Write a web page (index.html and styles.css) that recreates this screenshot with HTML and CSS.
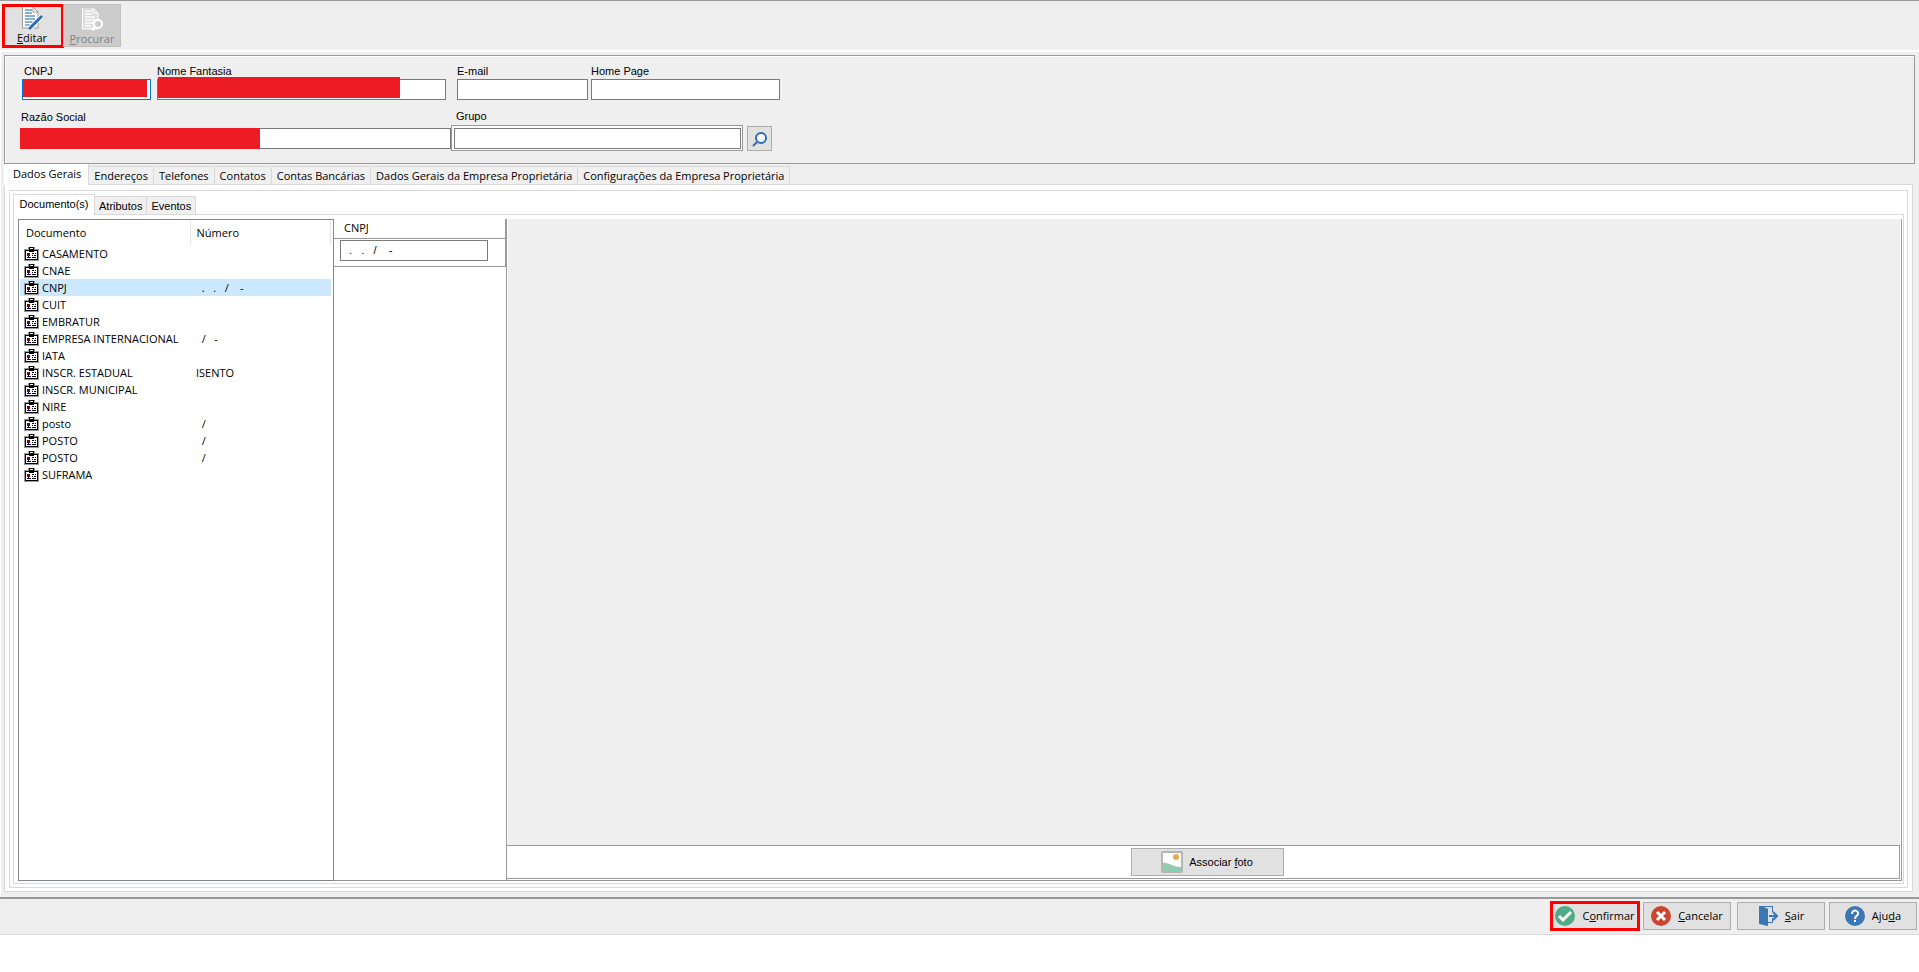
FILE: index.html
```html
<!DOCTYPE html>
<html lang="pt-BR">
<head>
<meta charset="utf-8">
<title>Cadastro de Empresa</title>
<link rel="stylesheet" href="styles.css">
</head>
<body>
<svg class="defs" aria-hidden="true">
  <symbol id="badge" viewBox="0 0 15 14">
    <path d="M0 2h4V0h7v2h4v12H0z" fill="#999"/>
    <path d="M5 0h5v4H5zM1 3h13v10H1z" fill="#000"/>
    <path d="M6 1h3v1H6zM2 4h11v8H2z" fill="#fff"/>
    <path d="M3 6h3v3H3z" fill="#800000"/><path d="M3 10h4v1H3zM4 9h1v1H4z" fill="#000080"/>
    <path d="M5 4h5v1H5zM8 6h2v1H8zM11 6h1v1h-1zM8 8h1v1H8zM10 8h2v1h-2zM8 10h4v1H8z" fill="#000"/>
  </symbol>
  <symbol id="page" viewBox="0 0 22 24">
    <path class="paper" d="M1 1h11l5 5v16H1z"/>
    <path class="lines" d="M4 4h7M4 7h7M4 10h10M4 13h10M4 16h10M4 19h6"/>
    <path class="edge" d="M1.500 1v21H17V6l-5-5v5h5"/>
  </symbol>
</svg>
<div class="app">
  <header class="toolbar">
    <button class="tool marked" type="button">
      <svg class="tool-icon" viewBox="0 0 22 24"><use href="#page"/><path d="M8 23l13-13" stroke="#fff" stroke-width="5"/><path d="M8 23l13-13" stroke="#2d6cb5" stroke-width="3"/></svg>
      <span><u>E</u>ditar</span>
    </button>
    <button class="tool off" type="button" disabled>
      <svg class="tool-icon" viewBox="0 0 22 24"><use href="#page"/><path d="M15 19l-4 4" stroke="#fff" stroke-width="3"/><circle cx="17" cy="17" r="4" fill="#ccc" stroke="#fff" stroke-width="2"/></svg>
      <span><u>P</u>rocurar</span>
    </button>
  </header>
  <main class="frame">
    <form class="company">
      <div class="fields first">
        <div class="field cnpj"><label for="cnpj">CNPJ</label><input id="cnpj" type="text"><i class="mask"></i></div>
        <div class="field fantasia"><label for="fantasia">Nome Fantasia</label><input id="fantasia" type="text"><i class="mask"></i></div>
        <div class="field email"><label for="email">E-mail</label><input id="email" type="text"></div>
        <div class="field home"><label for="home">Home Page</label><input id="home" type="text"></div>
      </div>
      <div class="fields second">
        <div class="field razao"><label for="razao">Razão Social</label><input id="razao" type="text"><i class="mask"></i></div>
        <div class="field grupo"><label for="grupo">Grupo</label><span class="sunken"><input id="grupo" type="text"></span></div>
        <button class="search" type="button" aria-label="Procurar grupo"><svg viewBox="0 0 16 16" width="16" height="16"><circle cx="9" cy="7" r="5" fill="#fff" stroke="#2d6cb5" stroke-width="2"/><path d="M5 11l-4 4" stroke="#2d6cb5" stroke-width="2"/></svg></button>
      </div>
    </form>
    <nav class="tabs outer">
      <button type="button" class="tab active">Dados Gerais</button><button type="button" class="tab">Endereços</button><button type="button" class="tab">Telefones</button><button type="button" class="tab">Contatos</button><button type="button" class="tab">Contas Bancárias</button><button type="button" class="tab">Dados Gerais da Empresa Proprietária</button><button type="button" class="tab">Configurações da Empresa Proprietária</button>
    </nav>
    <section class="page-outer">
      <div class="page-mid">
        <nav class="tabs inner">
          <button type="button" class="tab active">Documento(s)</button><button type="button" class="tab">Atributos</button><button type="button" class="tab">Eventos</button>
        </nav>
        <div class="page-inner">
          <div class="list">
            <table>
              <colgroup><col class="c1"><col></colgroup>
              <thead><tr><th>Documento</th><th>Número</th></tr></thead>
              <tbody>
                <tr><td><svg><use href="#badge"/></svg>CASAMENTO</td><td></td></tr>
                <tr><td><svg><use href="#badge"/></svg>CNAE</td><td></td></tr>
                <tr class="selected"><td><svg><use href="#badge"/></svg>CNPJ</td><td>  .   .   /    -</td></tr>
                <tr><td><svg><use href="#badge"/></svg>CUIT</td><td></td></tr>
                <tr><td><svg><use href="#badge"/></svg>EMBRATUR</td><td></td></tr>
                <tr><td><svg><use href="#badge"/></svg>EMPRESA INTERNACIONAL</td><td>  /   -</td></tr>
                <tr><td><svg><use href="#badge"/></svg>IATA</td><td></td></tr>
                <tr><td><svg><use href="#badge"/></svg>INSCR. ESTADUAL</td><td>ISENTO</td></tr>
                <tr><td><svg><use href="#badge"/></svg>INSCR. MUNICIPAL</td><td></td></tr>
                <tr><td><svg><use href="#badge"/></svg>NIRE</td><td></td></tr>
                <tr><td><svg><use href="#badge"/></svg>posto</td><td>  /</td></tr>
                <tr><td><svg><use href="#badge"/></svg>POSTO</td><td>  /</td></tr>
                <tr><td><svg><use href="#badge"/></svg>POSTO</td><td>  /</td></tr>
                <tr><td><svg><use href="#badge"/></svg>SUFRAMA</td><td></td></tr>
              </tbody>
            </table>
          </div>
          <div class="detail">
            <label for="doc">CNPJ</label>
            <div class="detail-field"><input id="doc" type="text" value="  .   .   /    -"></div>
          </div>
          <div class="photo">
            <div class="canvas"></div>
            <div class="photo-bar">
              <button type="button" class="btn attach"><svg viewBox="0 0 22 22" width="22" height="22"><rect x="1" y="1" width="20" height="20" rx="1" fill="#fff" stroke="#b5b5b5" stroke-width="2"/><path d="M2 12c6-1 8 4 18 4v4H2z" fill="#8fcdb0"/><circle cx="15" cy="6" r="3" fill="#e9a94f"/></svg><span>Associar <u>f</u>oto</span></button>
            </div>
          </div>
        </div>
      </div>
    </section>
  </main>
  <footer class="actions">
    <button type="button" class="btn marked"><svg viewBox="0 0 20 20"><circle cx="10" cy="10" r="10" fill="#4faa85"/><path d="M4 10l4 4 8-8" fill="none" stroke="#fff" stroke-width="3"/></svg><span>C<u>o</u>nfirmar</span></button>
    <button type="button" class="btn"><svg viewBox="0 0 20 20"><circle cx="10" cy="10" r="10" fill="#cb4630"/><path d="M6 6l8 8M14 6l-8 8" stroke="#fff" stroke-width="3"/></svg><span><u>C</u>ancelar</span></button>
    <button type="button" class="btn exit"><svg viewBox="0 0 20 20"><path d="M1 0h14v6h-1V1H6l4 2v13h4v-4h1v5h-5v3L1 18z" fill="#3b76b5"/><path d="M11 10h8M15 6l4 4-4 4" fill="none" stroke="#3b76b5" stroke-width="2"/></svg><span><u>S</u>air</span></button>
    <button type="button" class="btn"><svg viewBox="0 0 20 20"><circle cx="10" cy="10" r="10" fill="#3b76b5"/><path d="M7 8c0-5 7-4 6 0-.5 2-3 2-3 5" fill="none" stroke="#fff" stroke-width="2"/><path d="M9 14h2v2H9z" fill="#fff"/></svg><span>Aju<u>d</u>a</span></button>
  </footer>
</div>
</body>
</html>
```
FILE: styles.css
```css
* { box-sizing: border-box; }
body { margin: 0; background: #fff; color: #000; font: 11px/16px "Open Sans", sans-serif; }
button, input { font: inherit; color: inherit; margin: 0; border-radius: 0; }
.defs { display: none; }
.app { display: flex; flex-direction: column; height: 100vh; min-height: 560px; padding-bottom: 37px; }

.toolbar { display: flex; align-items: flex-end; padding: 0 3px 3px; height: 52px; border-top: 1px solid #999; border-bottom: 2px solid #fff; background: #efefef; }
.tool { display: flex; flex-direction: column; align-items: center; width: 58px; height: 43px; padding: 2px 0 0; border: 1px solid #adadad; background: #e1e1e1; }
.tool:first-child { width: 60px; height: 42px; padding: 0 2px 0 0; }
.tool span { line-height: 15px; }
.tool-icon { width: 22px; height: 24px; fill: none; flex: none; }
.paper { fill: var(--paper, #fff); }
.lines { stroke: var(--lines, #86b0d8); stroke-width: 2; }
.edge { fill: none; stroke: var(--edge, #9a9a9a); }
.off { --paper: #dcdcdc; --lines: #f4f4f4; --edge: #fff; background: #ccc; border-color: #bfbfbf; color: #838383; }
.marked { outline: 3px solid #f00; outline-offset: -2px; }

.frame { flex: 1; display: flex; flex-direction: column; min-height: 0; padding: 3px 4px 5px 3px; background: #efefef; border-left: 1px solid #fff; }
.company { height: 109px; padding: 6px 15px; border: 1px solid #999; box-shadow: inset 1px 1px #fff; font-family: "Liberation Sans", Arial, sans-serif; }
.fields { display: flex; }
.field { position: relative; display: flex; flex-direction: column; }
.field label { height: 17px; padding-top: 1px; }
.field input { width: 100%; height: 21px; padding: 0 3px; border: 1px solid #7a7a7a; background: #fff; outline: 0; }
.first { padding-left: 2px; }
.cnpj label { padding-left: 2px; }
.cnpj { width: 129px; margin-right: 6px; }
.field.cnpj input { border-color: #0078d7; }
.fantasia { width: 289px; margin-right: 11px; }
.email { width: 131px; margin-right: 3px; }
.home { width: 189px; }
.second { margin-top: 7px; align-items: flex-end; }
.razao { width: 431px; padding-bottom: 2px; }
.razao label { height: 20px; padding-left: 1px; }
.grupo { width: 292px; margin-right: 4px; }
.grupo label { height: 18px; padding-left: 5px; }
.sunken { padding: 2px 1px 1px 2px; border: 1px solid #999; background: #fff; }
.mask { position: absolute; left: 1px; bottom: 3px; width: 124px; height: 18px; background: #ed1c24; }
.fantasia .mask { bottom: 2px; width: 242px; height: 21px; }
.razao .mask { left: 0; bottom: 2px; width: 240px; height: 21px; }
.search { display: grid; place-items: center; width: 25px; height: 25px; padding: 0; border: 1px solid #adadad; background: #e1e1e1; }

.tabs { display: flex; align-items: flex-end; height: 21px; position: relative; z-index: 1; margin-bottom: -1px; }
.tab { height: 19px; padding: 0 5px; border: 1px solid #d9d9d9; border-left: 0; background: #f0f0f0; white-space: nowrap; line-height: 16px; }
.tab.active { height: 21px; border: 0; border-right: 1px solid #d9d9d9; background: #fff; padding-bottom: 2px; }
.outer .tab.active { padding-left: 9px; padding-right: 7px; }
.inner { font-family: "Liberation Sans", Arial, sans-serif; }
.inner .tab { padding-left: 4px; padding-right: 4px; }
.inner .tab.active { border: 1px solid #d9d9d9; border-bottom: 0; width: 82px; }
.page-outer { flex: 1; min-height: 0; display: flex; padding: 5px 4px 3px; margin-right: 2px; border: 1px solid #d9d9d9; background: #fff; }
.page-mid { flex: 1; min-width: 0; display: flex; flex-direction: column; padding: 3px; border: 1px solid #d9d9d9; }
.page-inner { flex: 1; min-height: 0; display: flex; padding: 4px 1px 2px 4px; border: 1px solid #d9d9d9; }
.list { width: 316px; padding: 1px; border: 1px solid #828790; background: #fff; }
table { width: 311px; border-collapse: collapse; table-layout: fixed; }
.c1 { width: 170px; }
th { height: 24px; padding: 0 6px; text-align: left; font-weight: 400; border-right: 1px solid #e5e5e5; }
td { height: 17px; padding: 0 6px; line-height: 17px; white-space: pre; }
td:first-child { padding-left: 4px; }
td svg { width: 15px; height: 14px; margin-right: 3px; vertical-align: -3px; }
.selected { background: #cce8ff; }
.detail { width: 172px; border-bottom: 1px solid #999; }
.detail label { display: block; height: 20px; padding: 1px 10px 0; border-bottom: 1px solid #999; border-right: 1px solid #999; }
.detail-field { height: 28px; padding: 1px 6px; border-bottom: 1px solid #999; border-right: 1px solid #999; }
.detail input { display: block; width: 148px; height: 21px; padding: 0 2px 2px; border: 1px solid #7a7a7a; font-family: "Liberation Sans", Arial, sans-serif; white-space: pre; }
.photo { flex: 1; display: flex; flex-direction: column; padding: 0 1px 1px 0; border: solid #999; border-width: 0 1px 1px; }
.canvas { flex: 1; background: #efefef; border-left: 1px solid #fff; }
.photo-bar { display: flex; justify-content: center; align-items: center; height: 34px; padding-left: 8px; border: 1px solid #999; border-left: 0; }
.btn { display: flex; align-items: center; justify-content: center; height: 28px; padding: 0; border: 1px solid #adadad; background: #e1e1e1; }
.attach { width: 153px; gap: 6px; font-family: "Liberation Sans", Arial, sans-serif; }

.actions { display: flex; justify-content: flex-end; gap: 4px; height: 38px; padding: 3px 2px; border-top: 2px solid #999; border-bottom: 1px solid #d9d9d9; background: #efefef; }
.actions .btn { width: 88px; gap: 7px; }
.actions svg { width: 20px; height: 20px; }
.exit { margin-left: 2px; }
```
